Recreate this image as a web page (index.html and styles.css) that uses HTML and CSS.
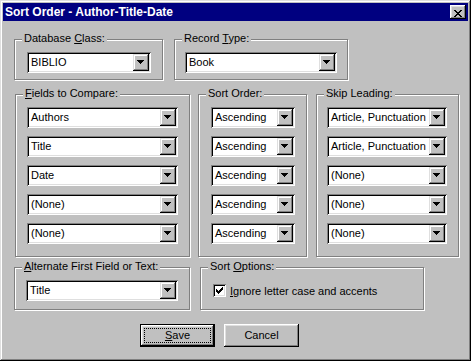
FILE: index.html
```html
<!DOCTYPE html>
<html lang="en">
<head>
  <meta charset="UTF-8">
  <title>Sort Order - Author-Title-Date</title>
  <link rel="stylesheet" href="styles.css">
</head>
<body>
  <div class="window">
    <!-- TITLE BAR -->
    <div class="titlebar">
      <span class="title">Sort Order - Author-Title-Date</span>
      <button class="close">
        <svg width="8" height="7" viewBox="0 0 8 7"><path d="M0 0h2v1H0zM6 0h2v1H6zM1 1h2v1H1zM5 1h2v1H5zM2 2h4v1H2zM3 3h2v1H3zM2 4h4v1H2zM1 5h2v1H1zM5 5h2v1H5zM0 6h2v1H0zM6 6h2v1H6z"/></svg>
      </button>
    </div>

    <div class="client">
      <!-- ROW 1 -->
      <div class="row row-1">
        <div class="group g-class">
          <div class="legend">Database <u>C</u>lass:</div>
          <div class="combo w-class"><span class="value">BIBLIO</span><span class="drop"><svg width="7" height="4" viewBox="0 0 7 4"><path d="M0 0h7v1H0zM1 1h5v1H1zM2 2h3v1H2zM3 3h1v1H3z"/></svg></span></div>
        </div>
        <div class="group g-type">
          <div class="legend">Record <u>T</u>ype:</div>
          <div class="combo w-type"><span class="value">Book</span><span class="drop"><svg width="7" height="4" viewBox="0 0 7 4"><path d="M0 0h7v1H0zM1 1h5v1H1zM2 2h3v1H2zM3 3h1v1H3z"/></svg></span></div>
        </div>
      </div>

      <!-- ROW 2 -->
      <div class="row row-2">
        <div class="group g-fields">
          <div class="legend"><u>F</u>ields to Compare:</div>
          <div class="stack">
            <div class="combo w-fields"><span class="value">Authors</span><span class="drop"><svg width="7" height="4" viewBox="0 0 7 4"><path d="M0 0h7v1H0zM1 1h5v1H1zM2 2h3v1H2zM3 3h1v1H3z"/></svg></span></div>
            <div class="combo w-fields"><span class="value">Title</span><span class="drop"><svg width="7" height="4" viewBox="0 0 7 4"><path d="M0 0h7v1H0zM1 1h5v1H1zM2 2h3v1H2zM3 3h1v1H3z"/></svg></span></div>
            <div class="combo w-fields"><span class="value">Date</span><span class="drop"><svg width="7" height="4" viewBox="0 0 7 4"><path d="M0 0h7v1H0zM1 1h5v1H1zM2 2h3v1H2zM3 3h1v1H3z"/></svg></span></div>
            <div class="combo w-fields"><span class="value">(None)</span><span class="drop"><svg width="7" height="4" viewBox="0 0 7 4"><path d="M0 0h7v1H0zM1 1h5v1H1zM2 2h3v1H2zM3 3h1v1H3z"/></svg></span></div>
            <div class="combo w-fields"><span class="value">(None)</span><span class="drop"><svg width="7" height="4" viewBox="0 0 7 4"><path d="M0 0h7v1H0zM1 1h5v1H1zM2 2h3v1H2zM3 3h1v1H3z"/></svg></span></div>
          </div>
        </div>
        <div class="group g-order">
          <div class="legend">Sort Order:</div>
          <div class="stack">
            <div class="combo w-order"><span class="value">Ascending</span><span class="drop"><svg width="7" height="4" viewBox="0 0 7 4"><path d="M0 0h7v1H0zM1 1h5v1H1zM2 2h3v1H2zM3 3h1v1H3z"/></svg></span></div>
            <div class="combo w-order"><span class="value">Ascending</span><span class="drop"><svg width="7" height="4" viewBox="0 0 7 4"><path d="M0 0h7v1H0zM1 1h5v1H1zM2 2h3v1H2zM3 3h1v1H3z"/></svg></span></div>
            <div class="combo w-order"><span class="value">Ascending</span><span class="drop"><svg width="7" height="4" viewBox="0 0 7 4"><path d="M0 0h7v1H0zM1 1h5v1H1zM2 2h3v1H2zM3 3h1v1H3z"/></svg></span></div>
            <div class="combo w-order"><span class="value">Ascending</span><span class="drop"><svg width="7" height="4" viewBox="0 0 7 4"><path d="M0 0h7v1H0zM1 1h5v1H1zM2 2h3v1H2zM3 3h1v1H3z"/></svg></span></div>
            <div class="combo w-order"><span class="value">Ascending</span><span class="drop"><svg width="7" height="4" viewBox="0 0 7 4"><path d="M0 0h7v1H0zM1 1h5v1H1zM2 2h3v1H2zM3 3h1v1H3z"/></svg></span></div>
          </div>
        </div>
        <div class="group g-skip">
          <div class="legend">Skip Leading:</div>
          <div class="stack">
            <div class="combo w-skip"><span class="value">Article, Punctuation</span><span class="drop"><svg width="7" height="4" viewBox="0 0 7 4"><path d="M0 0h7v1H0zM1 1h5v1H1zM2 2h3v1H2zM3 3h1v1H3z"/></svg></span></div>
            <div class="combo w-skip"><span class="value">Article, Punctuation</span><span class="drop"><svg width="7" height="4" viewBox="0 0 7 4"><path d="M0 0h7v1H0zM1 1h5v1H1zM2 2h3v1H2zM3 3h1v1H3z"/></svg></span></div>
            <div class="combo w-skip"><span class="value">(None)</span><span class="drop"><svg width="7" height="4" viewBox="0 0 7 4"><path d="M0 0h7v1H0zM1 1h5v1H1zM2 2h3v1H2zM3 3h1v1H3z"/></svg></span></div>
            <div class="combo w-skip"><span class="value">(None)</span><span class="drop"><svg width="7" height="4" viewBox="0 0 7 4"><path d="M0 0h7v1H0zM1 1h5v1H1zM2 2h3v1H2zM3 3h1v1H3z"/></svg></span></div>
            <div class="combo w-skip"><span class="value">(None)</span><span class="drop"><svg width="7" height="4" viewBox="0 0 7 4"><path d="M0 0h7v1H0zM1 1h5v1H1zM2 2h3v1H2zM3 3h1v1H3z"/></svg></span></div>
          </div>
        </div>
      </div>

      <!-- ROW 3 -->
      <div class="row row-3">
        <div class="group g-alt">
          <div class="legend"><u>A</u>lternate First Field or Text:</div>
          <div class="combo w-alt"><span class="value">Title</span><span class="drop"><svg width="7" height="4" viewBox="0 0 7 4"><path d="M0 0h7v1H0zM1 1h5v1H1zM2 2h3v1H2zM3 3h1v1H3z"/></svg></span></div>
        </div>
        <div class="group g-options">
          <div class="legend">Sort <u>O</u>ptions:</div>
          <label class="check-row">
            <span class="checkbox"><svg width="7" height="7" viewBox="0 0 7 7"><path d="M6 0h1v1H6zM5 1h2v1H5zM0 2h1v1H0zM4 2h3v1H4zM0 3h2v1H0zM3 3h3v1H3zM0 4h5v1H0zM1 5h3v1H1zM2 6h1v1H2z"/></svg></span>
            <span><u>I</u>gnore letter case and accents</span>
          </label>
        </div>
      </div>

      <!-- BUTTONS -->
      <div class="buttons">
        <button class="btn btn-default"><span class="focus"><u>S</u>ave</span></button>
        <button class="btn"><span class="focus">Cancel</span></button>
      </div>
    </div>
  </div>
</body>
</html>
```

FILE: styles.css
```css
* {
  margin: 0;
  padding: 0;
  box-sizing: border-box;
}
body {
  font-family: "Liberation Sans", Arial, sans-serif;
  font-size: 11px;
  color: #000;
  background: #c0c0c0;
}
u { text-decoration: underline; text-underline-offset: 1px; }

.window {
  width: 471px;
  height: 361px;
  padding: 3px;
  background: #c0c0c0;
  box-shadow: inset -1px -1px #000, inset 1px 1px #dfdfdf, inset -2px -2px #808080, inset 2px 2px #fff;
}

/* title bar */
.titlebar {
  height: 18px;
  background: #000080;
  display: flex;
  align-items: center;
  justify-content: space-between;
  padding: 0 2px;
}
.titlebar .title {
  color: #fff;
  font-weight: bold;
  font-size: 12px;
  line-height: 18px;
}
.close {
  width: 16px;
  height: 14px;
  border: 0;
  padding: 3px 0 0 4px;
  background: #c0c0c0;
  box-shadow: inset -1px -1px #000, inset 1px 1px #fff, inset -2px -2px #808080, inset 2px 2px #dfdfdf;
}
.close svg { display: block; }

/* rows */
.row { display: flex; align-items: flex-start; }
.row-1 { margin-top: 18px; padding-left: 11px; }
.row-2 { margin-top: 14px; padding-left: 12px; }
.row-3 { margin-top: 10px; padding-left: 11px; }

/* group boxes */
.group {
  --pad: 12px;
  display: flex;
  flex-direction: column;
  align-items: flex-start;
  padding-left: var(--pad);
  border: 1px solid #808080;
  box-shadow: 1px 1px 0 #fff, inset 1px 1px 0 #fff;
}
.group .legend {
  margin: -8px 0 0 calc(7px - var(--pad));
  padding: 0 2px;
  line-height: 13px;
  background: #c0c0c0;
  white-space: nowrap;
}
.group .legend + .combo,
.group .legend + .stack,
.group .legend + .check-row { margin-top: 7px; }

.g-class   { width: 149px; padding-bottom: 6px; }
.g-type    { width: 174px; padding-bottom: 6px; margin-left: 11px; --pad: 10px; }
.g-fields  { width: 175px; padding-bottom: 12px; --pad: 11px; }
.g-order   { width: 109px; padding-bottom: 12px; margin-left: 8px; }
.g-skip    { width: 143px; padding-bottom: 12px; margin-left: 9px; --pad: 10px; }
.g-alt     { width: 176px; padding-bottom: 8px; --pad: 11px; }
.g-options { width: 224px; height: 43px; margin-left: 10px; }

.stack { display: flex; flex-direction: column; gap: 8px; }

/* combo boxes */
.combo {
  height: 21px;
  padding: 2px;
  display: flex;
  align-items: center;
  background: #fff;
  box-shadow: inset 1px 1px #808080, inset -1px -1px #fff, inset 2px 2px #000, inset -2px -2px #dfdfdf;
}
.combo .value {
  flex: 1;
  padding-left: 2px;
  line-height: 13px;
  white-space: nowrap;
  overflow: hidden;
}
.combo .drop {
  width: 16px;
  height: 17px;
  padding: 6px 0 0 4px;
  background: #c0c0c0;
  box-shadow: inset -1px -1px #000, inset 1px 1px #dfdfdf, inset -2px -2px #808080, inset 2px 2px #fff;
}
.combo .drop svg { display: block; }

.w-class  { width: 124px; }
.w-type   { width: 152px; }
.w-fields { width: 151px; }
.w-order  { width: 84px; }
.w-skip   { width: 120px; }
.w-alt    { width: 152px; }

/* checkbox */
.check-row {
  height: 21px;
  display: flex;
  align-items: center;
  gap: 4px;
}
.checkbox {
  width: 13px;
  height: 13px;
  padding: 3px;
  background: #fff;
  box-shadow: inset 1px 1px #808080, inset -1px -1px #fff, inset 2px 2px #000, inset -2px -2px #dfdfdf;
}
.checkbox svg { display: block; }

/* buttons */
.buttons {
  display: flex;
  gap: 9px;
  margin-top: 14px;
  padding-left: 137px;
}
.btn {
  width: 75px;
  height: 23px;
  padding: 4px;
  border: 0;
  background: #c0c0c0;
  font: 11px "Liberation Sans", Arial, sans-serif;
  color: #000;
  box-shadow: inset -1px -1px #000, inset 1px 1px #fff, inset -2px -2px #808080, inset 2px 2px #dfdfdf;
}
.btn .focus {
  display: block;
  height: 100%;
  line-height: 13px;
  border: 1px solid transparent;
}
.btn-default {
  box-shadow: inset 0 0 0 1px #000, inset -2px -2px #000, inset 2px 2px #fff, inset -3px -3px #808080, inset 3px 3px #dfdfdf;
}
.btn-default .focus { border: 1px dotted #000; }
```
